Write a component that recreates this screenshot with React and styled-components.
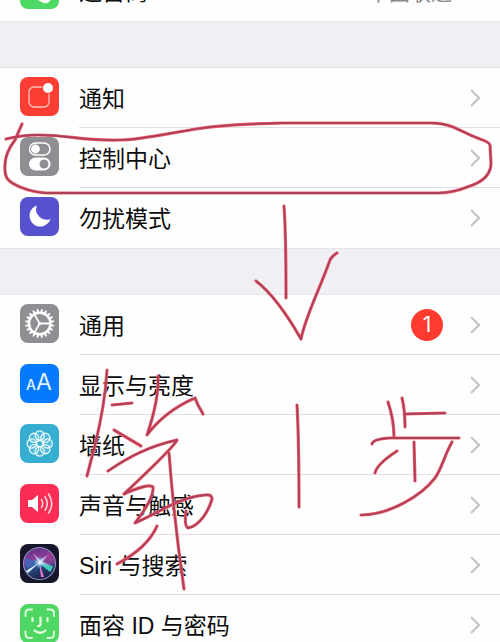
import React from 'react';
import styled, {createGlobalStyle} from 'styled-components';

const GlobalStyle = createGlobalStyle`
    body {
        margin: 0;
        background-color: #efeff4;
        font-family: "Liberation Sans", "Noto Sans CJK SC", sans-serif;
    }
`;
const Page = styled.main`
    position: relative;
    height: 100vh;
    overflow: hidden;
`;
const Settings = styled.div`
    display: flex;
    flex-direction: column;
    gap: 47px;
    margin-top: -39px;
`;
const Group = styled.nav`
    background-color: #fefefe;
    box-shadow: 0 0 0 1px #e6e6ea;
`;
const Row = styled.a`
    display: flex;
    align-items: center;
    height: 60px;
    padding-left: 20px;
    color: #0c0c0c;
    text-decoration: none;
`;
const Tile = styled.svg`
    flex: none;
    width: 39px;
    height: 39px;
    margin: 0 20px 3px 0;
    border-radius: 8px;
    background-color: ${props => props.$color};
`;
const RowBody = styled.div`
    flex: 1;
    display: flex;
    align-items: center;
    box-sizing: border-box;
    height: 60px;
    padding-right: 20px;
    border-bottom: 1px solid #e0e0e2;

    ${Row}:last-child & {
        border-bottom-color: transparent;
    }
`;
const Label = styled.span`
    flex: 1;
    padding-top: 2px;
    font-size: 23px;
    line-height: 32px;
`;
const Value = styled.span`
    margin-right: 18px;
    padding-top: 4px;
    font-size: 21px;
    line-height: 32px;
    color: #8a8a8e;
`;
const Badge = styled.span`
    width: 32px;
    margin-right: 27px;
    border-radius: 50%;
    background-color: #ff3b30;
    color: #fff;
    font-family: Inter, sans-serif;
    font-size: 21px;
    line-height: 32px;
    text-align: center;
`;
const Arrow = styled.svg`
    flex: none;
    width: 10px;
    height: 18px;
    fill: none;
    stroke: #c2c2c6;
    stroke-width: 2;
`;
const Ink = styled.svg`
    position: absolute;
    top: 0;
    left: 0;
    width: 500px;
    height: 642px;
    fill: none;
    stroke-linecap: round;
    stroke-linejoin: round;
    pointer-events: none;
`;

const around = (count) => Array.from({length: count}, (_, index) => index * 360 / count);

const PhoneIcon = () => (
    <path
        fill="#fff"
        d="M11 7c-3 2-4 5-2 10 3 8 8 14 15 16 3 1 6-1 7-4 0-1 0-2-1-3l-5-3c-1-1-2 0-3 1s-2 1-3 0l-5-6c-1-1-1-2 0-3s2-2 1-3l-3-5z"
    />
);
const NoticeIcon = () => (
    <>
        <rect x="9" y="10" width="20" height="20" rx="5" fill="none" stroke="#ffc4b8" strokeWidth="1.3" />
        <circle cx="28" cy="11" r="6" fill="#fb3d34" />
        <circle cx="28" cy="11" r="5" fill="#fff" />
    </>
);
const ControlIcon = () => (
    <>
        <rect x="9.5" y="6" width="20.5" height="12" rx="6" fill="none" stroke="#fff" strokeWidth="1.5" />
        <circle cx="15.5" cy="12" r="4.4" fill="#fff" />
        <rect x="9" y="20.5" width="21.5" height="13" rx="6.5" fill="#fff" />
        <circle cx="24" cy="27" r="4.5" fill="#8e8e93" />
    </>
);
const MoonIcon = () => (
    <path fill="#fff" d="M16.8 8.5A10.8 10.8 0 1 0 30.6 22 10.6 10.6 0 0 1 16.8 8.5z" />
);
const GearIcon = () => (
    <g transform="translate(19.7 19.5)" stroke="#fff" fill="none">
        <circle r="10.7" strokeWidth="2.4" />
        {around(20).map(angle => (
            <path key={angle} d="M11-1.3 14.6-.7V.7L11 1.3z" fill="#fff" stroke="none" transform={`rotate(${angle + 9})`} />
        ))}
        {around(3).map(angle => (
            <path key={angle} d="M1 0H10" strokeWidth="1.8" transform={`rotate(${angle})`} />
        ))}
        <circle r="1.8" fill="#fff" stroke="none" />
    </g>
);
const DisplayIcon = () => (
    <g fill="#e4f4ff" fontFamily="Inter, sans-serif">
        <text x="6" y="26" fontSize="14" fontWeight="500">A</text>
        <text x="16" y="26" fontSize="23">A</text>
    </g>
);
const FlowerIcon = () => (
    <g transform="translate(19.7 19.5)" stroke="#e8fbff" strokeWidth="1.3" fill="#fff" fillOpacity=".12">
        {around(8).map(angle => (
            <circle key={angle} cx="8" r="4.6" transform={`rotate(${angle})`} />
        ))}
        <circle r="3" fill="none" />
    </g>
);
const SoundIcon = () => (
    <>
        <path fill="#fff" d="M8 16h4l6-5v17l-6-5H8z" />
        <g fill="none" stroke="#ffd5dc" strokeWidth="1.6" strokeLinecap="round">
            <path d="M21.5 15.5q2.5 4 0 8" />
            <path d="M25 12.8q4.5 6.7 0 13.4" />
            <path d="M28.5 10q6.500 9.500 0 19" />
        </g>
    </>
);
const SiriIcon = () => (
    <>
        <defs>
            <linearGradient id="orb" x1=".3" y1="0" x2=".6" y2="1">
                <stop offset="0" stopColor="#5d3480" />
                <stop offset=".35" stopColor="#8b3b9b" />
                <stop offset=".6" stopColor="#2c4b84" />
                <stop offset="1" stopColor="#141a40" />
            </linearGradient>
            <radialGradient id="glow">
                <stop offset="0" stopColor="#fff" />
                <stop offset=".4" stopColor="#b8e6f5" stopOpacity=".7" />
                <stop offset="1" stopColor="#60d8e8" stopOpacity="0" />
            </radialGradient>
        </defs>
        <circle cx="19.5" cy="19.5" r="16" fill="url(#orb)" stroke="#8f8dbc" strokeWidth="1.1" />
        <path d="M19 18 6 14q-2 6 1 11z" fill="#2c7bc8" opacity=".6" />
        <path d="M20 18 31 8q5 7 3 13z" fill="#b03c94" opacity=".6" />
        <path d="M19 19 33 22q-1 4-3 6z" fill="#4ee0c8" opacity=".85" />
        <path d="M19 18 24 33 21 33z" fill="#e87ac8" />
        <path d="M20 18 6 27l2 2z" fill="#d8f6ff" />
        <path d="M18 17 13 9l7 7 8-5-6 7 9 3-11-1z" fill="#e8dcff" opacity=".8" />
        <circle cx="19.5" cy="18.5" r="6" fill="url(#glow)" />
    </>
);
const FaceIcon = () => (
    <g fill="none" stroke="#e6ffe2" strokeWidth="1.8" strokeLinecap="round">
        <path d="M5.5 12V9.5q0-4 4-4H12M27.5 5.5H30q4 0 4 4V12M34 27.5V30q0 4-4 4H27.5M12 34H9.5q-4 0-4-4V27.5" />
        <path d="M12.5 14v3M27.5 14v3M20.5 13.5V20q0 2-2.5 2M14.5 26.5q5.5 4.5 11 0" strokeWidth="2.2" />
    </g>
);

const groups = [
    [
        {label: '运营商', color: '#4cd964', Icon: PhoneIcon, value: '中国联通'},
    ],
    [
        {label: '通知', color: '#fb3d34', Icon: NoticeIcon},
        {label: '控制中心', color: '#8e8e93', Icon: ControlIcon},
        {label: '勿扰模式', color: '#5651cf', Icon: MoonIcon},
    ],
    [
        {label: '通用', color: '#8e8e93', Icon: GearIcon, badge: 1},
        {label: '显示与亮度', color: '#067aff', Icon: DisplayIcon},
        {label: '墙纸', color: '#36aed2', Icon: FlowerIcon},
        {label: '声音与触感', color: '#fb2d55', Icon: SoundIcon},
        {label: 'Siri 与搜索', color: '#15162c', Icon: SiriIcon},
        {label: '面容 ID 与密码', color: '#4fd763', Icon: FaceIcon},
    ],
];

// pen strokes: the loop, the arrow, then 第 1 步
const strokes = [
    'M22 124 15 140Q5 153 5 165C4 178 8 182 20 187Q32 192 46 193H438Q453 193 470 186C485 181 491 173 491 163L490 145Q489 142 480 139C464 133 463 131 453 127Q443 123 430 123H283C240 124 210 126 190 130C165 134 140 140 120 140C80 141 70 135 38 135Q22 135 6 139',
    'M284 206Q286 233 286 298',
    'M256 281Q277 297 301 339C306 315 319 291 330 260Q332 256 337 253',
    'M107 370Q105 405 95 445L87 476',
    'M112 405 132 403',
    'M158 376Q159 400 147 435Q165 411 195 398L198 405 203 414',
    'M114 430 141 446',
    'M108 471C130 456 150 446 177 440Q175 446 124 494C137 488 150 484 153 487C154 495 145 510 135 523C160 512 180 497 205 495Q212 494 212 499C209 510 200 526 188 528Q184 526 186 511',
    'M169 453Q174 520 184 589',
    'M157 526C150 542 136 554 117 564',
    'M297 405Q299 440 299 507',
    'M388 402Q394 420 394 437',
    'M402 398Q405 410 405 427M405 414 445 413',
    'M372 444Q373 439 390 438L459 438',
    'M375 473Q377 464 397 451',
    'M414 442 415 481',
    'M452 442C445 454 442 468 435 478C422 495 390 515 361 515',
];

const Chevron = () => (
    <Arrow viewBox="0 0 10 18" aria-hidden="true">
        <path d="M1 1 9 9 1 17" />
    </Arrow>
);

function App () {
    return (
        <Page>
            <GlobalStyle />
            <Settings>
                {groups.map((group, index) => (
                    <Group key={index}>
                        {group.map(({label, color, Icon, value, badge}) => (
                            <Row href="#" key={label}>
                                <Tile viewBox="0 0 39 39" $color={color} aria-hidden="true">
                                    <Icon />
                                </Tile>
                                <RowBody>
                                    <Label>{label}</Label>
                                    {value && <Value>{value}</Value>}
                                    {badge && <Badge>{badge}</Badge>}
                                    <Chevron />
                                </RowBody>
                            </Row>
                        ))}
                    </Group>
                ))}
            </Settings>
            <Ink viewBox="0 0 500 642" aria-hidden="true">
                {strokes.map(d => (
                    <g key={d}>
                        <path d={d} stroke="#f0606e" strokeWidth="3.2" />
                        <path d={d} stroke="#ad3f58" strokeWidth="1.8" />
                    </g>
                ))}
            </Ink>
        </Page>
    )
}

export default App;
